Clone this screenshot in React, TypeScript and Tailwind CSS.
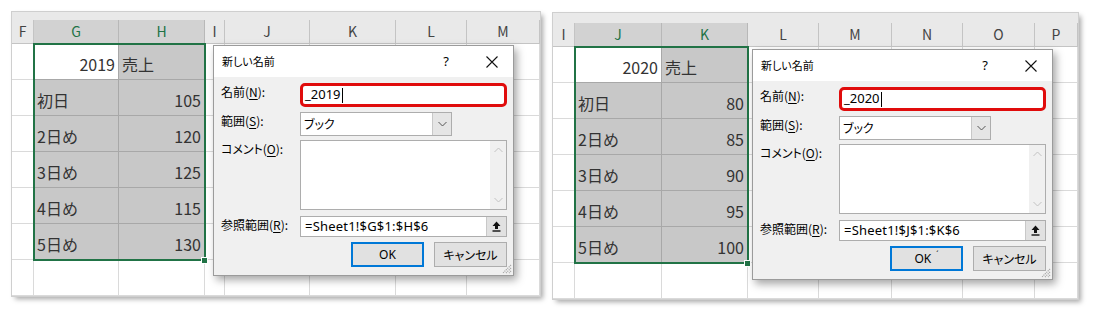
import React from 'react';

type Col = { label: string; w: string; sel?: boolean };

const JP = "font-['Noto_Sans_CJK_JP',sans-serif]";

const leftCols: Col[] = [
  { label: 'F', w: 'w-[22px]' },
  { label: 'G', w: 'w-[85px]', sel: true },
  { label: 'H', w: 'w-[86px]', sel: true },
  { label: 'I', w: 'w-[20px]' },
  { label: 'J', w: 'w-[85px]' },
  { label: 'K', w: 'w-[86px]' },
  { label: 'L', w: 'w-[71px]' },
  { label: 'M', w: 'w-[73px]' },
];

const rightCols: Col[] = [
  { label: 'I', w: 'w-[22px]' },
  { label: 'J', w: 'w-[87px]', sel: true },
  { label: 'K', w: 'w-[86px]', sel: true },
  { label: 'L', w: 'w-[71px]' },
  { label: 'M', w: 'w-[73px]' },
  { label: 'N', w: 'w-[71px]' },
  { label: 'O', w: 'w-[72px]' },
  { label: 'P', w: 'w-[43px]' },
];

const days = ['初日', '2日め', '3日め', '4日め', '5日め'];

const Label: React.FC<{ children: React.ReactNode }> = ({ children }) => (
  <div className="w-[86px] shrink-0 pl-[7px] pt-[1px] leading-[16px]">{children}</div>
);

const U: React.FC<{ c: string }> = ({ c }) => <span className="underline underline-offset-2">{c}</span>;

const Chevron: React.FC<{ up?: boolean; color?: string }> = ({ up, color = '#606060' }) => (
  <svg width="9" height="6" viewBox="0 0 9 6">
    <path d={up ? 'M0.5 5 L4.5 1 L8.5 5' : 'M0.5 1 L4.5 5 L8.5 1'} fill="none" stroke={color} strokeWidth="1" />
  </svg>
);

const NameDialog: React.FC<{ pos: string; name: string; refText: string; okMark?: boolean }> = ({ pos, name, refText, okMark }) => (
  <div
    className={`absolute ${pos} w-[301px] h-[231px] flex flex-col bg-[#f0f0f0] border border-[#9b9b9b] shadow-[3px_4px_8px_rgba(0,0,0,0.35)] text-[12px] text-black ${JP} [font-feature-settings:'palt']`}
  >
    <div className="h-[31px] shrink-0 bg-white flex items-center pl-[8px] pr-[7px]">
      <span className="flex-1 text-[11px]">新しい名前</span>
      <span className="w-[12px] text-center text-[13px] font-['Noto_Sans',sans-serif]">?</span>
      <span className="w-[28px] ml-[26px] flex justify-center">
        <svg width="12" height="12" viewBox="0 0 12 12">
          <path d="M0.5 0.5 L11.5 11.5 M11.5 0.5 L0.5 11.5" stroke="#111" strokeWidth="1.1" />
        </svg>
      </span>
    </div>

    <div className="flex mt-[6px]">
      <Label>名前(<U c="N" />):</Label>
      <div className="w-[207px] h-[24px] border-[3px] border-[#e00c0c] rounded-[5px] bg-white flex items-center pl-[2px] text-[13px] font-['Noto_Sans',sans-serif]">
        {name}
        <span className="w-px h-[15px] bg-black ml-[1px]" />
      </div>
    </div>

    <div className="flex mt-[5px]">
      <Label>範囲(<U c="S" />):</Label>
      <div className="w-[152px] h-[24px] border border-[#adadad] bg-white flex items-center">
        <span className="flex-1 pl-[3px] text-[12px]">ブック</span>
        <span className="w-[19px] h-full bg-[#e5e5e5] border-l border-[#c8c8c8] flex items-center justify-center">
          <Chevron color="#555" />
        </span>
      </div>
    </div>

    <div className="flex mt-[4px]">
      <Label>コメント(<U c="O" />):</Label>
      <div className="w-[207px] h-[70px] border border-[#adadad] bg-white flex justify-end">
        <div className="w-[16px] h-full bg-[#f0f0f0] flex flex-col items-center justify-between py-[6px]">
          <Chevron up color="#c2c2c2" />
          <Chevron color="#c2c2c2" />
        </div>
      </div>
    </div>

    <div className="flex mt-[6px]">
      <Label>参照範囲(<U c="R" />):</Label>
      <div className="w-[207px] h-[21px] border border-[#adadad] bg-white flex items-center">
        <span className="flex-1 pl-[4px] text-[13px] tracking-[0.2px] font-['Noto_Sans',sans-serif]">{refText}</span>
        <span className="w-[20px] h-full bg-[#e1e1e1] border-l border-[#c8c8c8] flex items-center justify-center">
          <svg width="9" height="11" viewBox="0 0 9 11">
            <path d="M4.5 0.5 L8.5 5 H6 V8 H3 V5 H0.5 Z" fill="#111" />
            <rect x="0.5" y="9.3" width="8" height="1.4" fill="#111" />
          </svg>
        </span>
      </div>
    </div>

    <div className="flex justify-end gap-[10px] pr-[6px] mt-[5px]">
      <div className="w-[73px] h-[25px] border-2 border-[#0078d7] bg-[#e1e1e1] flex items-center justify-center text-[12px] font-['Noto_Sans',sans-serif]">
        OK
        {okMark && <span className="ml-[5px] -mt-[8px] text-[8px] leading-none">ˊ</span>}
      </div>
      <div className="w-[73px] h-[25px] border border-[#adadad] bg-[#e1e1e1] flex items-center justify-center text-[12px]">
        キャンセル
      </div>
    </div>

    <svg className="absolute right-[1px] bottom-[1px]" width="11" height="11" viewBox="0 0 11 11">
      <path d="M10 2 L2 10 M10 5 L5 10 M10 8 L8 10" stroke="#a9a9a9" strokeWidth="1.2" strokeDasharray="1.2 0.8" />
    </svg>
  </div>
);

const Sheet: React.FC<{
  cols: Col[];
  year: string;
  values: string[];
  strip: string;
  width: string;
  selBox: string;
  handle: string;
  dialog: React.ReactNode;
}> = ({ cols, year, values, strip, width, selBox, handle, dialog }) => {
  const selStart = cols.findIndex((c) => c.sel);
  return (
    <div className={`relative ${width} shrink-0 bg-white overflow-hidden shadow-[0_0_0_1px_#cfcfcf,3px_3px_5px_rgba(0,0,0,0.35)] ${JP}`}>
      <div className={`${strip} bg-[#e9e9e9]`} />
      <div className="flex h-[24px]">
        {cols.map((c) => (
          <div
            key={c.label}
            className={`${c.w} shrink-0 border-r border-b flex items-center justify-center text-[14px] ${
              c.sel ? 'bg-[#d2d2d2] text-[#217346] border-[#b8b8b8]' : 'bg-[#e9e9e9] text-[#444] border-[#c4c4c4]'
            }`}
          >
            {c.label}
          </div>
        ))}
      </div>
      {Array.from({ length: 7 }).map((_, r) => (
        <div key={r} className="flex h-[36px]">
          {cols.map((c, ci) => {
            const k = ci - selStart;
            const inSel = !!c.sel && r < 6;
            const active = inSel && r === 0 && k === 0;
            let text = '';
            let right = false;
            if (inSel) {
              if (r === 0) {
                text = k === 0 ? year : '売上';
                right = k === 0;
              } else {
                text = k === 0 ? days[r - 1] : values[r - 1];
                right = k === 1;
              }
            }
            return (
              <div
                key={c.label}
                className={`${c.w} shrink-0 border-r border-b flex items-end pb-[5px] px-[3px] text-[16px] leading-[20px] text-[#333] ${
                  inSel ? (active ? 'bg-white border-[#a8a8a8]' : 'bg-[#c8c8c8] border-[#a8a8a8]') : 'border-[#dadada]'
                } ${right ? 'justify-end' : ''}`}
              >
                {text}
              </div>
            );
          })}
        </div>
      ))}
      <div className={`absolute ${selBox} border-2 border-[#217346]`} />
      <div className={`absolute ${handle} w-[7px] h-[7px] bg-[#217346] border border-white`} />
      {dialog}
    </div>
  );
};

export default function App() {
  return (
    <div className="w-[1097px] h-[314px] bg-white flex items-start gap-[13px] pl-[12px] pt-[12px]">
      <Sheet
        cols={leftCols}
        year="2019"
        values={['105', '120', '125', '115', '130']}
        strip="h-[8px]"
        width="w-[528px]"
        selBox="left-[21px] top-[31px] w-[173px] h-[218px]"
        handle="left-[189px] top-[245px]"
        dialog={<NameDialog pos="left-[201px] top-[33px]" name="_2019" refText="=Sheet1!$G$1:$H$6" />}
      />
      <div className="mt-[1px]">
        <Sheet
          cols={rightCols}
          year="2020"
          values={['80', '85', '90', '95', '100']}
          strip="h-[10px]"
          width="w-[525px]"
          selBox="left-[21px] top-[33px] w-[175px] h-[218px]"
          handle="left-[191px] top-[247px]"
          dialog={<NameDialog pos="left-[199px] top-[36px]" name="_2020" refText="=Sheet1!$J$1:$K$6" okMark />}
        />
      </div>
    </div>
  );
}
